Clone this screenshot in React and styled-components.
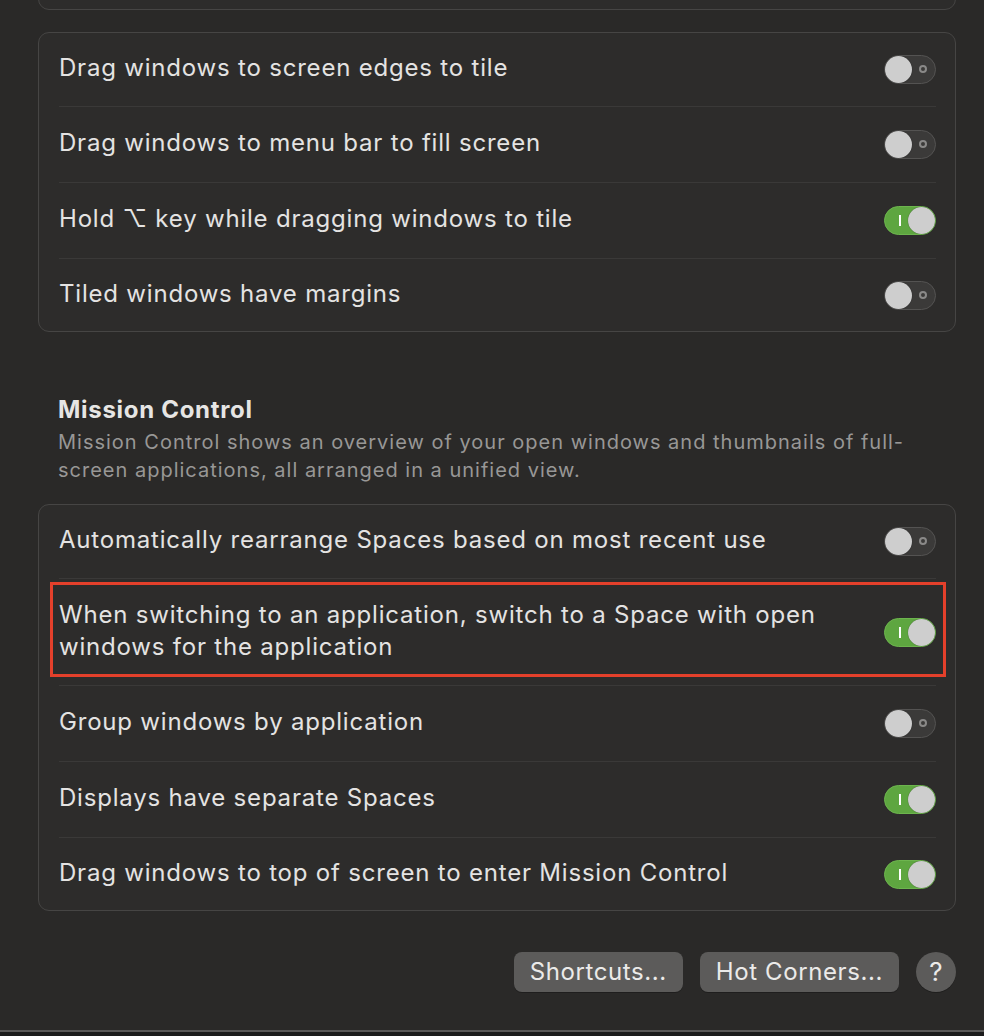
import React from 'react'
import styled, { createGlobalStyle } from 'styled-components'

const GlobalStyle = createGlobalStyle`
    html, body {
        margin: 0;
        padding: 0;
        background: #2a2928;
    }
    body {
        font-family: Inter, "Noto Sans", "DejaVu Sans", sans-serif;
        -webkit-font-smoothing: antialiased;
    }
`

const tiling = [
    { label: 'Drag windows to screen edges to tile', on: false },
    { label: 'Drag windows to menu bar to fill screen', on: false },
    { label: 'Hold \u2325 key while dragging windows to tile', on: true },
    { label: 'Tiled windows have margins', on: false },
]

const mission = [
    { label: 'Automatically rearrange Spaces based on most recent use', on: false },
    { label: 'When switching to an application, switch to a Space with open windows for the application', on: true, tall: true, marked: true },
    { label: 'Group windows by application', on: false },
    { label: 'Displays have separate Spaces', on: true },
    { label: 'Drag windows to top of screen to enter Mission Control', on: true },
]

function Toggle({ on }) {
    return (
        <Track $on={on}>
            {on ? <OnMark /> : <OffMark />}
            <Knob $on={on} />
        </Track>
    )
}

function SettingRow({ item }) {
    return (
        <Row $tall={item.tall}>
            <Label $tall={item.tall}>{item.label}</Label>
            <Toggle on={item.on} />
            {item.marked && <Highlight />}
        </Row>
    )
}

export default function App() {
    return (
        <>
            <GlobalStyle />
            <Window>
                <Content>
                    <Panel>
                        <Row />
                    </Panel>
                    <Panel>
                        {tiling.map((item) => <SettingRow key={item.label} item={item} />)}
                    </Panel>
                    <SectionHeader>
                        <SectionTitle>Mission Control</SectionTitle>
                        <SectionText>
                            Mission Control shows an overview of your open windows and thumbnails of full-screen applications, all arranged in a unified view.
                        </SectionText>
                    </SectionHeader>
                    <Panel>
                        {mission.map((item) => <SettingRow key={item.label} item={item} />)}
                    </Panel>
                    <ButtonBar>
                        <Button>Shortcuts...</Button>
                        <Button>Hot Corners...</Button>
                        <HelpButton>?</HelpButton>
                    </ButtonBar>
                </Content>
                <Footer />
            </Window>
        </>
    )
}

const Window = styled.div`
    width: 984px;
    height: 1036px;
    overflow: hidden;
    display: flex;
    flex-direction: column;
`
const Content = styled.div`
    flex: 1;
    margin-top: -65px;
    padding: 0 28px 0 38px;
    display: flex;
    flex-direction: column;
    gap: 22px;
`
const Panel = styled.div`
    background: #2d2c2b;
    border: 1px solid #464544;
    border-radius: 11px;
    padding: 0 19px 0 20px;
    display: flex;
    flex-direction: column;
`
const Row = styled.div`
    position: relative;
    box-sizing: border-box;
    height: ${(p) => (p.$tall ? '107px' : '76px')};
    display: flex;
    align-items: center;
    justify-content: space-between;
    gap: 24px;
    &:first-child {
        height: 73px;
    }
    &:last-child {
        height: 73px;
    }
    & + & {
        border-top: 1px solid #3a3938;
    }
`
const Label = styled.div`
    font-size: 24px;
    line-height: 32px;
    color: #e4e3e2;
    letter-spacing: 0.8px;
    max-width: ${(p) => (p.$tall ? '790px' : 'none')};
    padding-bottom: 3px;
`
const Track = styled.div`
    position: relative;
    flex: none;
    width: 52px;
    height: 29px;
    box-sizing: border-box;
    border-radius: 15px;
    background: ${(p) => (p.$on ? '#5ea640' : '#3b3a39')};
    border: 1px solid ${(p) => (p.$on ? '#6db54e' : '#545352')};
`
const Knob = styled.div`
    position: absolute;
    top: 0;
    left: ${(p) => (p.$on ? '23px' : '0')};
    width: 27px;
    height: 27px;
    border-radius: 50%;
    background: #cecece;
    box-shadow: 0 0 1px rgba(0, 0, 0, 0.5);
`
const OffMark = styled.div`
    position: absolute;
    top: 9px;
    right: 8px;
    width: 4px;
    height: 4px;
    border-radius: 50%;
    border: 2px solid #8a8988;
`
const OnMark = styled.div`
    position: absolute;
    top: 8px;
    left: 14px;
    width: 2px;
    height: 11px;
    background: #ffffff;
`
const Highlight = styled.div`
    position: absolute;
    top: 3px;
    bottom: 8px;
    left: -9px;
    right: -10px;
    border: 3px solid #e4402b;
    pointer-events: none;
`
const SectionHeader = styled.div`
    margin-top: 41px;
    margin-bottom: -2px;
    padding-left: 20px;
`
const SectionTitle = styled.div`
    font-size: 24px;
    line-height: 30px;
    font-weight: 700;
    letter-spacing: 0.7px;
    color: #e6e5e4;
`
const SectionText = styled.div`
    margin-top: 3px;
    font-size: 20px;
    line-height: 28px;
    letter-spacing: 1px;
    color: #989796;
    max-width: 870px;
`
const ButtonBar = styled.div`
    margin-top: 19px;
    display: flex;
    justify-content: flex-end;
    align-items: center;
    gap: 17px;
`
const Button = styled.div`
    height: 40px;
    padding: 0 16px;
    border-radius: 8px;
    background: #5c5b5a;
    color: #ebeae9;
    font-size: 24px;
    line-height: 40px;
    letter-spacing: 0.6px;
    box-shadow: 0 1px 0 rgba(0, 0, 0, 0.25);
`
const HelpButton = styled(Button)`
    width: 40px;
    padding: 0;
    border-radius: 50%;
    text-align: center;
    font-size: 26px;
    letter-spacing: 0;
`
const Footer = styled.div`
    flex: none;
    height: 4px;
    border-top: 2px solid #5a5958;
    background: #1c1c1c;
`
